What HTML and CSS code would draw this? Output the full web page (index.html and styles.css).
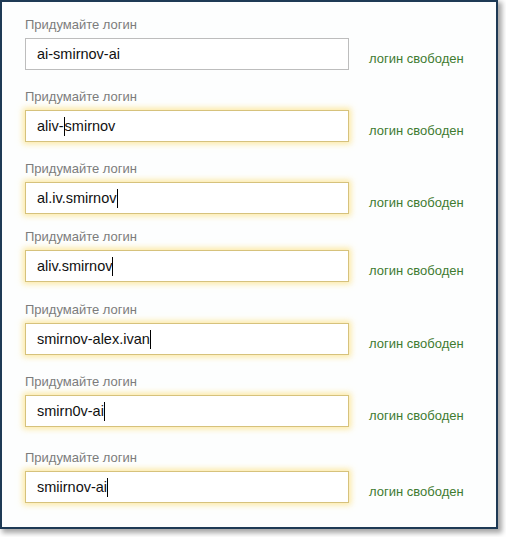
FILE: index.html
```html
<!DOCTYPE html>
<html lang="ru">
<head>
<meta charset="utf-8">
<link rel="stylesheet" href="styles.css">
</head>
<body>
<div class="frame">
  <div class="row">
    <div class="label">Придумайте логин</div>
    <div class="line">
      <div class="field">ai-smirnov-ai</div>
      <div class="status">логин свободен</div>
    </div>
  </div>
  <div class="row">
    <div class="label">Придумайте логин</div>
    <div class="line">
      <div class="field focus">aliv-<span class="caret"></span>smirnov</div>
      <div class="status">логин свободен</div>
    </div>
  </div>
  <div class="row">
    <div class="label">Придумайте логин</div>
    <div class="line">
      <div class="field focus">al.iv.smirnov<span class="caret"></span></div>
      <div class="status">логин свободен</div>
    </div>
  </div>
  <div class="row tight">
    <div class="label">Придумайте логин</div>
    <div class="line">
      <div class="field focus">aliv.smirnov<span class="caret"></span></div>
      <div class="status">логин свободен</div>
    </div>
  </div>
  <div class="row wide">
    <div class="label">Придумайте логин</div>
    <div class="line">
      <div class="field focus">smirnov-alex.ivan<span class="caret"></span></div>
      <div class="status">логин свободен</div>
    </div>
  </div>
  <div class="row">
    <div class="label">Придумайте логин</div>
    <div class="line">
      <div class="field focus">smirn0v-ai<span class="caret"></span></div>
      <div class="status">логин свободен</div>
    </div>
  </div>
  <div class="row loose">
    <div class="label">Придумайте логин</div>
    <div class="line">
      <div class="field focus">smiirnov-ai<span class="caret"></span></div>
      <div class="status">логин свободен</div>
    </div>
  </div>
</div>
</body>
</html>
```

FILE: styles.css
```css
html, body {
  margin: 0;
  padding: 0;
  background: #ffffff;
}
body {
  width: 506px;
  height: 537px;
  font-family: "Liberation Sans", Arial, sans-serif;
}
.frame {
  box-sizing: border-box;
  width: 498px;
  height: 529px;
  border: 2px solid #1e3a55;
  background: #fdfefe;
  box-shadow: 3px 3px 5px 1px rgba(0, 0, 0, 0.35);
  padding: 15px 0 0 23px;
}
.row {
  margin-top: 19px;
}
.row:first-child {
  margin-top: 0;
}
.row.tight {
  margin-top: 15px;
}
.row.wide {
  margin-top: 20px;
}
.row.loose {
  margin-top: 23px;
}
.label {
  font-size: 13px;
  line-height: 16px;
  color: #7c7c7c;
  margin-bottom: 5px;
}
.line {
  display: flex;
  align-items: center;
}
.field {
  box-sizing: border-box;
  width: 324px;
  height: 32px;
  border: 1px solid #bdbdbd;
  background: #fff;
  padding: 0 0 0 11px;
  font-size: 14.5px;
  line-height: 30px;
  color: #111;
  white-space: nowrap;
}
.field.focus {
  border-color: #d6c27c;
  box-shadow: 0 0 6px 2px rgba(252, 218, 100, 0.6);
}
.caret {
  display: inline-block;
  width: 1px;
  height: 19px;
  background: #000;
  vertical-align: -5px;
}
.status {
  margin-left: 20px;
  padding-top: 9px;
  font-size: 13px;
  color: #3f7b31;
  white-space: nowrap;
}
```
